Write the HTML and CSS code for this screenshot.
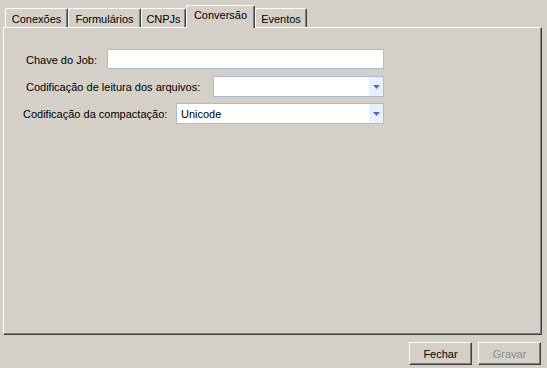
FILE: index.html
```html
<!DOCTYPE html>
<html lang="pt-BR">
<head>
<meta charset="utf-8">
<title>Conversão</title>
<link rel="stylesheet" href="styles.css">
</head>
<body>
<div class="window">
  <div class="tabs">
    <div class="tab tab-conexoes">Conexões</div>
    <div class="tab tab-formularios">Formulários</div>
    <div class="tab tab-cnpjs">CNPJs</div>
    <div class="tab tab-conversao selected">Conversão</div>
    <div class="tab tab-eventos">Eventos</div>
  </div>
  <div class="panel">
    <div class="row row-job">
      <label class="label">Chave do Job:</label>
      <div class="textbox"></div>
    </div>
    <div class="row row-leitura">
      <label class="label">Codificação de leitura dos arquivos:</label>
      <div class="combo combo-leitura">
        <span class="combo-value"></span>
        <span class="combo-btn"><svg width="7" height="4" viewBox="0 0 7 4"><path d="M0 0H7L3.5 4Z" fill="#4e6fa8"/></svg></span>
      </div>
    </div>
    <div class="row row-compact">
      <label class="label">Codificação da compactação:</label>
      <div class="combo combo-compact">
        <span class="combo-value">Unicode</span>
        <span class="combo-btn"><svg width="7" height="4" viewBox="0 0 7 4"><path d="M0 0H7L3.5 4Z" fill="#4e6fa8"/></svg></span>
      </div>
    </div>
  </div>
  <div class="footer">
    <button class="btn">Fechar</button>
    <button class="btn disabled">Gravar</button>
  </div>
</div>
</body>
</html>
```

FILE: styles.css
```css
html, body {
  margin: 0;
  padding: 0;
}
body {
  background: #d4d0c8;
  font-family: "Liberation Sans", Arial, sans-serif;
  font-size: 11px;
  color: #000;
  width: 547px;
  height: 368px;
  overflow: hidden;
}
.window {
  display: flex;
  flex-direction: column;
  width: 547px;
  height: 368px;
}
.tabs {
  display: flex;
  align-items: flex-end;
  height: 27px;
  padding-left: 5px;
  box-sizing: border-box;
}
.tab {
  box-sizing: border-box;
  height: 19px;
  border-top: 1px solid #fff;
  border-left: 1px solid #fff;
  border-right: 1px solid #404040;
  box-shadow: inset -1px 0 0 #808080;
  border-radius: 2px 2px 0 0;
  display: flex;
  align-items: center;
  justify-content: center;
  padding-top: 1px;
  white-space: nowrap;
}
.tab-conexoes { width: 63px; }
.tab-formularios { width: 73px; }
.tab-cnpjs { width: 45px; }
.tab-conversao { width: 69px; }
.tab-eventos { width: 52px; }
.tab.selected {
  height: 23px;
  position: relative;
  z-index: 2;
  margin-bottom: -1px;
  background: #d4d0c8;
  padding-top: 0;
  padding-bottom: 4px;
}
.panel {
  box-sizing: border-box;
  margin-left: 3px;
  width: 539px;
  height: 308px;
  border-top: 1px solid #fff;
  border-left: 1px solid #fff;
  border-right: 1px solid #404040;
  border-bottom: 1px solid #404040;
  box-shadow: inset -1px -1px 0 #808080;
  padding-top: 21px;
  display: flex;
  flex-direction: column;
  gap: 6px;
}
.row {
  display: flex;
  align-items: center;
  width: 380px;
  height: 21px;
  box-sizing: border-box;
}
.row-job { padding-left: 22px; }
.row-leitura { padding-left: 22px; }
.row-compact { padding-left: 19px; }
.label {
  white-space: nowrap;
}
.textbox {
  margin-left: auto;
  box-sizing: border-box;
  width: 277px;
  height: 20px;
  background: #fff;
  border: 1px solid #a8bcd8;
  align-self: flex-start;
}
.combo {
  margin-left: auto;
  box-sizing: border-box;
  height: 21px;
  background: #fff;
  border: 1px solid #a8bcd8;
  display: flex;
  align-items: center;
}
.combo-leitura { width: 171px; }
.combo-compact { width: 208px; }
.combo-value {
  flex: 1;
  padding-left: 4px;
}
.combo-btn {
  width: 14px;
  align-self: stretch;
  background: #e8f0fb;
  display: flex;
  align-items: center;
  justify-content: center;
}
.footer {
  display: flex;
  justify-content: flex-end;
  gap: 6px;
  padding-top: 7px;
  padding-right: 6px;
}
.btn {
  box-sizing: border-box;
  width: 63px;
  height: 23px;
  background: #d4d0c8;
  font-family: "Liberation Sans", Arial, sans-serif;
  font-size: 11px;
  color: #000;
  border-top: 1px solid #fff;
  border-left: 1px solid #fff;
  border-right: 1px solid #404040;
  border-bottom: 1px solid #404040;
  box-shadow: inset -1px -1px 0 #808080;
  padding: 0;
  margin: 0;
}
.btn.disabled {
  color: #8d8d8d;
}
```
